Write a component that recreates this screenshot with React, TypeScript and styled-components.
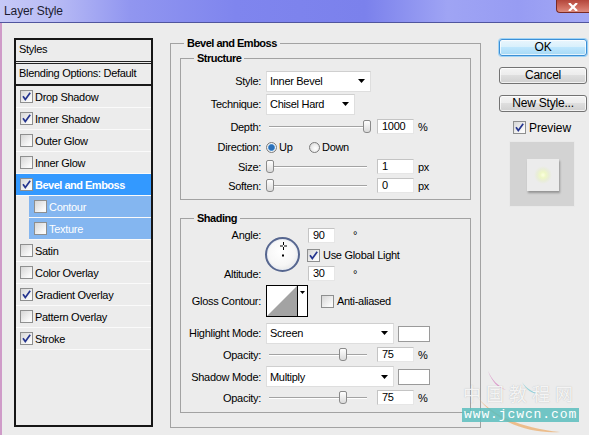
import React from "react";
import styled, { createGlobalStyle } from "styled-components";

const GlobalStyle = createGlobalStyle`
  html, body { margin: 0; padding: 0; }
  body {
    width: 589px; height: 435px; overflow: hidden;
    background: #ececec;
    font-family: "Liberation Sans", Arial, sans-serif;
    font-size: 11px; letter-spacing: -0.3px; color: #000;
  }
  #root { width: 589px; height: 435px; }
`;

const Window = styled.div`
  position: relative;
  width: 589px;
  height: 435px;
  display: flex;
  flex-direction: column;
  overflow: hidden;
`;

const TitleBar = styled.div`
  flex: none;
  height: 22px;
  display: flex;
  align-items: flex-start;
  border-bottom: 1px solid #50559e;
  background: linear-gradient(
    90deg,
    #c6c9f7 0%,
    #b9bcf5 9%,
    #9196f0 22%,
    #7f85ee 40%,
    #7b81ec 62%,
    #9fa4f4 76%,
    #979cf3 88%,
    #a3a8f5 100%
  );
`;

const Title = styled.span`
  padding-left: 4px;
  line-height: 22px;
  font-size: 12px;
  letter-spacing: -0.1px;
  color: #1c1c30;
`;

const CloseButton = styled.div`
  margin-left: auto;
  width: 33px;
  height: 13px;
  box-sizing: border-box;
  border: 1px solid #7a2b25;
  border-top: none;
  border-right: none;
  border-radius: 0 0 0 4px;
  background: linear-gradient(#b3463b, #cf6d60 60%, #dd8b7f);
  display: flex;
  align-items: flex-end;
  justify-content: center;
  padding-bottom: 1px;
`;

const Body = styled.div`
  flex: 1;
  display: flex;
  align-items: flex-start;
  border-left: 2px solid #cf9bc8;
  padding-left: 12px;
  background: #ececec;
`;

/* ---------- left styles list ---------- */

const StylesPanel = styled.div`
  flex: none;
  margin-top: 15px;
  width: 139px;
  height: 389px;
  box-sizing: border-box;
  border: 2px solid #161616;
  display: flex;
  flex-direction: column;
`;

const PanelHeader = styled.div`
  height: 24px;
  box-sizing: border-box;
  padding-left: 3px;
  line-height: 18px;
  border-bottom: 3px double #222;
`;

const BlendRow = styled.div`
  height: 22px;
  box-sizing: border-box;
  padding-left: 3px;
  line-height: 19px;
  border-bottom: 2px solid #1a1a1a;
`;

type Kind = "normal" | "selected" | "sub";

const StyleRow = styled.div<{ $kind: Kind }>`
  height: 22px;
  box-sizing: border-box;
  border-bottom: 1px solid #fafafa;
  display: flex;
  align-items: center;
  gap: 2px;
  padding-left: ${(p) => (p.$kind === "sub" ? 5 : 4)}px;
  margin-left: ${(p) => (p.$kind === "sub" ? 13 : 0)}px;
  background: ${(p) =>
    p.$kind === "selected" ? "#3399ff" : p.$kind === "sub" ? "#84b6f0" : "transparent"};
  color: ${(p) => (p.$kind === "normal" ? "#000" : "#fff")};
  font-weight: ${(p) => (p.$kind === "selected" ? "bold" : "normal")};
  letter-spacing: ${(p) => (p.$kind === "selected" ? "-0.5px" : "-0.3px")};
`;

const Box = styled.span`
  flex: none;
  width: 13px;
  height: 13px;
  box-sizing: border-box;
  border: 1px solid #8e8f8f;
  background: linear-gradient(135deg, #d6d6d6, #fafafa 80%);
  display: inline-flex;
  align-items: center;
  justify-content: center;
`;

/* ---------- middle options ---------- */

const OptionsGroup = styled.fieldset`
  flex: none;
  margin: 13px 0 0 17px;
  width: 311px;
  min-width: 0;
  box-sizing: border-box;
  padding: 1px 9px 14px;
  border: 1px solid #a2a2a2;
`;

const GroupTitle = styled.legend<{ $indent: number }>`
  margin-left: ${(p) => p.$indent}px;
  padding: 0 3px;
  font-weight: bold;
  line-height: 14px;
  letter-spacing: -0.5px;
`;

const SubGroup = styled.fieldset<{ $top: number; $pt: number; $pb: number }>`
  margin: ${(p) => p.$top}px 0 0;
  min-width: 0;
  padding: ${(p) => p.$pt}px 0 ${(p) => p.$pb}px;
  border: 1px solid #a2a2a2;
`;

const Row = styled.div<{ $h: number }>`
  height: ${(p) => p.$h}px;
  display: grid;
  grid-template-columns: 80px auto;
  column-gap: 5px;
  align-items: center;
`;

const Label = styled.span`
  text-align: right;
  white-space: nowrap;
`;

const Controls = styled.div`
  display: flex;
  align-items: center;
`;

const Select = styled.div<{ $w: number }>`
  flex: none;
  width: ${(p) => p.$w}px;
  height: 21px;
  box-sizing: border-box;
  background: #fff;
  border: 1px solid #dedede;
  border-top-color: #cfcfcf;
  display: flex;
  align-items: center;
  justify-content: space-between;
  padding: 0 5px 0 3px;
`;

const Field = styled.div<{ $w: number }>`
  flex: none;
  width: ${(p) => p.$w}px;
  height: 15px;
  box-sizing: border-box;
  background: #fff;
  border: 1px solid;
  border-color: #c4c4c4 #e6e6e6 #e6e6e6 #c4c4c4;
  padding-left: 4px;
  line-height: 13px;
`;

const Unit = styled.span<{ $gap: number }>`
  margin-left: ${(p) => p.$gap}px;
`;

const SliderTrack = styled.div`
  position: relative;
  flex: none;
  width: 105px;
  height: 15px;
  margin-right: 6px;
  &::before {
    content: "";
    position: absolute;
    left: 3px;
    right: 4px;
    top: 7px;
    height: 1px;
    background: #a3a3a3;
    box-shadow: 0 1px 0 #fff;
  }
`;

const Thumb = styled.div`
  position: absolute;
  top: 1px;
  width: 8px;
  height: 13px;
  box-sizing: border-box;
  border: 1px solid #8a8a8a;
  border-radius: 2px 2px 3px 3px;
  background: linear-gradient(#fff, #dadada);
`;

const RadioOption = styled.label<{ $w: number }>`
  display: flex;
  align-items: center;
  gap: 2px;
  width: ${(p) => p.$w}px;
`;

const RadioDot = styled.span<{ $on?: boolean }>`
  flex: none;
  width: 11px;
  height: 11px;
  box-sizing: border-box;
  border-radius: 50%;
  border: 1px solid #7b7b7b;
  background: ${(p) =>
    p.$on
      ? "radial-gradient(circle, #2a6fb8 0 2.6px, #6aa6dd 3.2px, #f4f6f8 3.8px, #d8d8d8 100%)"
      : "radial-gradient(circle at 60% 60%, #ffffff 0, #f0f0f0 40%, #cfcfcf 100%)"};
`;

const AngleBlock = styled.div`
  height: 55px;
  display: grid;
  grid-template-columns: 80px 47px auto;
  grid-template-rows: 18px 22px 15px;
  align-items: center;
`;

const AngleDial = styled.div`
  grid-column: 2;
  grid-row: 1 / 4;
  margin: 2px 0 0 4px;
  width: 35px;
  height: 35px;
  box-sizing: border-box;
  border-radius: 50%;
  border: 2px solid #56668f;
  background: radial-gradient(circle at 45% 40%, #ffffff 0, #f6f6f6 55%, #dcdcdc 100%);
  box-shadow: inset 0 0 0 1px #e8ecf4;
`;

const CheckLine = styled.label<{ $gap?: number }>`
  display: flex;
  align-items: center;
  gap: 3px;
  margin-left: ${(p) => p.$gap ?? 0}px;
`;

const ContourBox = styled.div`
  flex: none;
  width: 42px;
  height: 32px;
  box-sizing: border-box;
  border: 1px solid #000;
  background: #fff;
  display: flex;
`;

const ContourArrow = styled.div`
  flex: none;
  width: 10px;
  border-left: 1px solid #000;
  display: flex;
  justify-content: center;
  padding-top: 5px;
  box-sizing: border-box;
`;

const Swatch = styled.div`
  flex: none;
  align-self: flex-start;
  margin: 3px 0 0 4px;
  width: 32px;
  height: 16px;
  box-sizing: border-box;
  border: 1px solid #9a9a9a;
  background: #fff;
`;

/* ---------- right column ---------- */

const Side = styled.div`
  flex: none;
  margin: 16px 0 0 18px;
  width: 88px;
  display: flex;
  flex-direction: column;
`;

const ButtonStack = styled.div`
  display: flex;
  flex-direction: column;
  gap: 11px;
`;

const Button = styled.button<{ $primary?: boolean }>`
  width: 88px;
  height: 17px;
  padding: 0;
  font-family: "Liberation Sans", Arial, sans-serif;
  font-size: 12px;
  letter-spacing: -0.2px;
  line-height: 15px;
  color: #000;
  border-radius: 3px;
  border: 1px solid ${(p) => (p.$primary ? "#3c8fd6" : "#737373")};
  background: ${(p) =>
    p.$primary
      ? "linear-gradient(#eaf6fd 0%, #d9f0fc 45%, #bee6fd 50%, #a7d9f5 100%)"
      : "linear-gradient(#f4f4f4 0%, #ececec 45%, #dedede 50%, #d0d0d0 100%)"};
  box-shadow: ${(p) =>
    p.$primary ? "0 0 0 1px #9fd3f5, inset 0 0 0 1px rgba(255,255,255,.7)" : "inset 0 0 0 1px rgba(255,255,255,.7)"};
`;

const PreviewToggle = styled.label`
  display: flex;
  align-items: center;
  gap: 3px;
  margin: 9px 0 0 14px;
  font-size: 12px;
  letter-spacing: -0.1px;
  height: 13px;
`;

const PreviewBox = styled.div`
  margin: 7px 0 0 10px;
  width: 66px;
  height: 66px;
  box-sizing: border-box;
  background: #d3d3d3;
  border: 1px solid #e9e9e9;
  display: flex;
  align-items: center;
  justify-content: center;
`;

const PreviewTile = styled.div`
  width: 32px;
  height: 32px;
  margin: 1px 0 0 1px;
  background: radial-gradient(circle, #fbffe0 0, #eef7c6 3px, #e9edd8 6px, #ececec 9px);
  box-shadow: 1px 2px 2px rgba(0, 0, 0, 0.3);
`;

/* ---------- watermark ---------- */

const Watermark = styled.div`
  position: absolute;
  left: 462px;
  top: 366px;
  width: 118px;
  height: 69px;
  pointer-events: none;
  display: flex;
  flex-direction: column;
  align-items: flex-start;
  justify-content: flex-end;
  padding-bottom: 13px;
  box-sizing: border-box;
`;

const WatermarkArt = styled.svg`
  position: absolute;
  left: 0;
  top: 0;
`;

const WatermarkCn = styled.span`
  position: relative;
  padding-left: 1px;
  font-family: "Noto Sans CJK SC", sans-serif;
  font-size: 18px;
  line-height: 18px;
  letter-spacing: 5px;
  color: rgba(255, 255, 255, 0.85);
  text-shadow: 0 0 1px rgba(140, 140, 140, 0.6);
`;

const WatermarkUrl = styled.span`
  position: relative;
  margin-top: 6px;
  padding: 0 2px;
  background: rgba(92, 190, 190, 0.85);
  color: #fff;
  font-family: "Liberation Mono", monospace;
  font-size: 13px;
  line-height: 14px;
  letter-spacing: 0.9px;
`;

/* ---------- helpers ---------- */

const Check = ({ on }: { on?: boolean }) => (
  <Box>
    {on && (
      <svg width="11" height="11" viewBox="0 0 11 11">
        <path d="M2 5.3 L4.3 8.6 L9.2 1.8" fill="none" stroke="#25358f" strokeWidth="1.7" />
      </svg>
    )}
  </Box>
);

const Arrow = () => (
  <svg width="7" height="4" viewBox="0 0 7 4">
    <polygon points="0,0 7,0 3.5,4" fill="#000" />
  </svg>
);

const Slider = ({ value }: { value: number }) => (
  <SliderTrack>
    <Thumb style={{ left: Math.round(value * 97) }} />
  </SliderTrack>
);

const styleItems: { label: string; checked?: boolean; kind: Kind }[] = [
  { label: "Drop Shadow", checked: true, kind: "normal" },
  { label: "Inner Shadow", checked: true, kind: "normal" },
  { label: "Outer Glow", kind: "normal" },
  { label: "Inner Glow", kind: "normal" },
  { label: "Bevel and Emboss", checked: true, kind: "selected" },
  { label: "Contour", kind: "sub" },
  { label: "Texture", kind: "sub" },
  { label: "Satin", kind: "normal" },
  { label: "Color Overlay", kind: "normal" },
  { label: "Gradient Overlay", checked: true, kind: "normal" },
  { label: "Pattern Overlay", kind: "normal" },
  { label: "Stroke", checked: true, kind: "normal" },
];

export default function App() {
  return (
    <>
      <GlobalStyle />
      <Window>
        <TitleBar>
          <Title>Layer Style</Title>
          <CloseButton>
            <svg width="10" height="8" viewBox="0 0 10 8">
              <path d="M1 0 L9 8 M9 0 L1 8" stroke="#fff" strokeWidth="2.2" />
            </svg>
          </CloseButton>
        </TitleBar>
        <Body>
          <StylesPanel>
            <PanelHeader>Styles</PanelHeader>
            <BlendRow>Blending Options: Default</BlendRow>
            {styleItems.map((s) => (
              <StyleRow key={s.label} $kind={s.kind}>
                <Check on={s.checked} />
                <span>{s.label}</span>
              </StyleRow>
            ))}
          </StylesPanel>

          <OptionsGroup>
            <GroupTitle $indent={4}>Bevel and Emboss</GroupTitle>
            <SubGroup $top={0} $pt={5} $pb={4}>
              <GroupTitle $indent={13}>Structure</GroupTitle>
              <Row $h={22}>
                <Label>Style:</Label>
                <Controls>
                  <Select $w={105}>
                    <span>Inner Bevel</span>
                    <Arrow />
                  </Select>
                </Controls>
              </Row>
              <Row $h={24}>
                <Label>Technique:</Label>
                <Controls>
                  <Select $w={89}>
                    <span>Chisel Hard</span>
                    <Arrow />
                  </Select>
                </Controls>
              </Row>
              <Row $h={21}>
                <Label>Depth:</Label>
                <Controls>
                  <Slider value={1} />
                  <Field $w={37}>1000</Field>
                  <Unit $gap={4}>%</Unit>
                </Controls>
              </Row>
              <Row $h={20}>
                <Label>Direction:</Label>
                <Controls>
                  <RadioOption $w={43}>
                    <RadioDot $on />
                    <span>Up</span>
                  </RadioOption>
                  <RadioOption $w={60}>
                    <RadioDot />
                    <span>Down</span>
                  </RadioOption>
                </Controls>
              </Row>
              <Row $h={19}>
                <Label>Size:</Label>
                <Controls>
                  <Slider value={0} />
                  <Field $w={37}>1</Field>
                  <Unit $gap={4}>px</Unit>
                </Controls>
              </Row>
              <Row $h={19}>
                <Label>Soften:</Label>
                <Controls>
                  <Slider value={0} />
                  <Field $w={37}>0</Field>
                  <Unit $gap={4}>px</Unit>
                </Controls>
              </Row>
            </SubGroup>

            <SubGroup $top={11} $pt={1} $pb={6}>
              <GroupTitle $indent={13}>Shading</GroupTitle>
              <AngleBlock>
                <Label style={{ gridColumn: 1, gridRow: 1 }}>Angle:</Label>
                <AngleDial>
                  <svg width="31" height="31" viewBox="0 0 31 31">
                    <path d="M16.5 3 V6 M16.5 8 V11 M13 7 H16 M17 7 H20" stroke="#000" strokeWidth="1" />
                    <rect x="15" y="15.5" width="2" height="2" fill="#000" />
                  </svg>
                </AngleDial>
                <Controls style={{ gridColumn: 3, gridRow: 1 }}>
                  <Field $w={27}>90</Field>
                  <Unit $gap={18}>°</Unit>
                </Controls>
                <CheckLine style={{ gridColumn: 3, gridRow: 2 }} $gap={-1}>
                  <Check on />
                  <span>Use Global Light</span>
                </CheckLine>
                <Label style={{ gridColumn: 1, gridRow: 3 }}>Altitude:</Label>
                <Controls style={{ gridColumn: 3, gridRow: 3 }}>
                  <Field $w={27}>30</Field>
                  <Unit $gap={18}>°</Unit>
                </Controls>
              </AngleBlock>
              <Row $h={40}>
                <Label>Gloss Contour:</Label>
                <Controls>
                  <ContourBox>
                    <svg width="30" height="30" viewBox="0 0 30 30">
                      <polygon points="0,30 30,0 30,30" fill="#a3a3a3" />
                    </svg>
                    <ContourArrow>
                      <svg width="5" height="3" viewBox="0 0 5 3">
                        <polygon points="0,0 5,0 2.5,3" fill="#000" />
                      </svg>
                    </ContourArrow>
                  </ContourBox>
                  <CheckLine $gap={13}>
                    <Check />
                    <span>Anti-aliased</span>
                  </CheckLine>
                </Controls>
              </Row>
              <Row $h={24}>
                <Label>Highlight Mode:</Label>
                <Controls>
                  <Select $w={128}>
                    <span>Screen</span>
                    <Arrow />
                  </Select>
                  <Swatch />
                </Controls>
              </Row>
              <Row $h={19}>
                <Label>Opacity:</Label>
                <Controls>
                  <Slider value={0.75} />
                  <Field $w={37}>75</Field>
                  <Unit $gap={4}>%</Unit>
                </Controls>
              </Row>
              <Row $h={25}>
                <Label>Shadow Mode:</Label>
                <Controls>
                  <Select $w={128}>
                    <span>Multiply</span>
                    <Arrow />
                  </Select>
                  <Swatch />
                </Controls>
              </Row>
              <Row $h={17}>
                <Label>Opacity:</Label>
                <Controls>
                  <Slider value={0.75} />
                  <Field $w={37}>75</Field>
                  <Unit $gap={4}>%</Unit>
                </Controls>
              </Row>
            </SubGroup>
          </OptionsGroup>

          <Side>
            <ButtonStack>
              <Button $primary>OK</Button>
              <Button>Cancel</Button>
              <Button>New Style...</Button>
            </ButtonStack>
            <PreviewToggle>
              <Check on />
              <span>Preview</span>
            </PreviewToggle>
            <PreviewBox>
              <PreviewTile />
            </PreviewBox>
          </Side>
        </Body>

        <Watermark>
          <WatermarkArt width="118" height="69" viewBox="0 0 118 69">
            <path d="M26 5 C30 14 36 20 44 24 C36 22 30 16 26 5 Z" fill="rgba(214,120,190,0.7)" />
            <path d="M60 16 C64 22 70 26 78 28 C70 28 64 24 60 16 Z" fill="rgba(110,200,210,0.7)" />
            <path d="M16 32 C34 52 62 62 98 66 C70 68 36 58 16 32 Z" fill="rgba(236,170,100,0.7)" />
          </WatermarkArt>
          <WatermarkCn>中国教程网</WatermarkCn>
          <WatermarkUrl>www.jcwcn.com</WatermarkUrl>
        </Watermark>
      </Window>
    </>
  );
}
